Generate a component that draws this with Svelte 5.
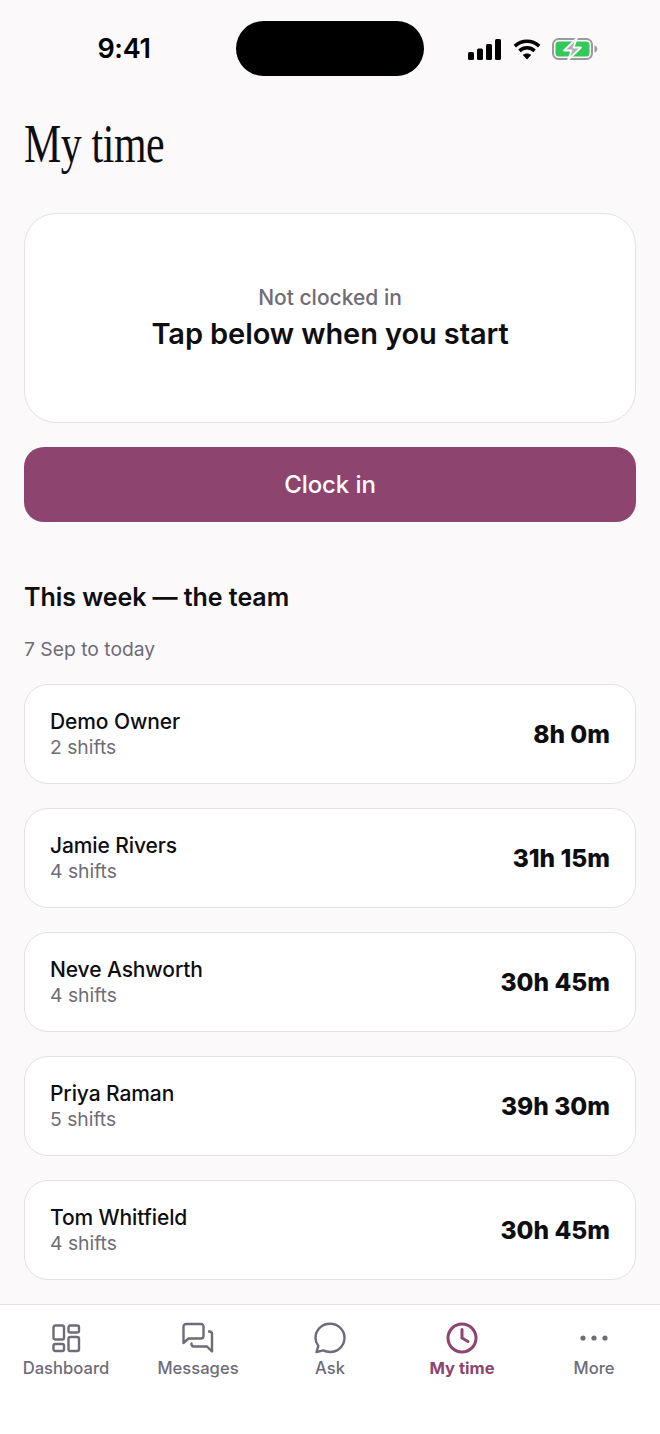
<script>
  const team = [
    { name: 'Demo Owner', shifts: '2 shifts', total: '8h 0m' },
    { name: 'Jamie Rivers', shifts: '4 shifts', total: '31h 15m' },
    { name: 'Neve Ashworth', shifts: '4 shifts', total: '30h 45m' },
    { name: 'Priya Raman', shifts: '5 shifts', total: '39h 30m' },
    { name: 'Tom Whitfield', shifts: '4 shifts', total: '30h 45m' }
  ];
</script>

<div class="screen">
  <header class="status">
    <span class="clock">9:41</span>
    <div class="island"></div>
    <div class="indicators">
      <svg width="34" height="21" viewBox="0 0 34 21" fill="#000">
        <rect x="0" y="13" width="6" height="8" rx="1.5"/>
        <rect x="9" y="9.5" width="6" height="11.5" rx="1.5"/>
        <rect x="18" y="5" width="6" height="16" rx="1.5"/>
        <rect x="27" y="0" width="6" height="21" rx="1.5"/>
      </svg>
      <svg width="28" height="21" viewBox="0 0 28 21" fill="none" stroke="#000" stroke-width="3.6">
        <path d="M1.8 7.2C9 .6 19 .6 26.2 7.2"/>
        <path d="M6.4 11.8c4.5-4 10.700-4 15.200 0"/>
        <path d="M14 20.500l-4.200-4.600c2.400-2 6-2 8.400 0z" fill="#000" stroke="none"/>
      </svg>
      <svg width="46" height="22" viewBox="0 0 46 22" fill="none">
        <rect x="1" y="1" width="39" height="20" rx="5.500" stroke="#9b9b9f" stroke-width="2"/>
        <rect x="3.500" y="3.500" width="34" height="15" rx="3.500" fill="#34c759"/>
        <path d="M42.500 7.500c1.800.6 2.800 1.900 2.800 3.500s-1 2.900-2.800 3.500z" fill="#9b9b9f"/>
        <path d="M25 0 12 12.500h7.500L16 22l13-12.500h-7.500z" fill="#aeaeb2" stroke="#fbf9fa" stroke-width="1.800" stroke-linejoin="round"/>
      </svg>
    </div>
  </header>

  <main class="content">
    <h1>My time</h1>

    <section class="state-card">
      <p class="state-label">Not clocked in</p>
      <p class="state-title">Tap below when you start</p>
    </section>

    <button class="clock-in" type="button">Clock in</button>

    <h2>This week — the team</h2>
    <p class="range">7 Sep to today</p>

    <ul class="team">
      {#each team as member}
        <li class="row">
          <div class="who">
            <span class="name">{member.name}</span>
            <span class="shifts">{member.shifts}</span>
          </div>
          <span class="total">{member.total}</span>
        </li>
      {/each}
    </ul>
  </main>

  <nav class="tabs">
    <div class="tab">
      <svg width="32" height="32" viewBox="0 0 32 32" fill="none" stroke="currentColor" stroke-width="2.400" stroke-linejoin="round">
        <rect x="3.500" y="3.500" width="10.500" height="14" rx="1.800"/>
        <rect x="18.500" y="3.500" width="10.500" height="7" rx="1.800"/>
        <rect x="3.500" y="22" width="10.500" height="7" rx="1.800"/>
        <rect x="18.500" y="15" width="10.500" height="14" rx="1.800"/>
      </svg>
      <span>Dashboard</span>
    </div>
    <div class="tab">
      <svg width="32" height="32" viewBox="0 0 32 32" fill="none" stroke="currentColor" stroke-width="2.400" stroke-linecap="round" stroke-linejoin="round">
        <path d="M1.500 21V4.500a2.500 2.500 0 0 1 2.500-2.500h15a2.500 2.500 0 0 1 2.500 2.500V14a2.500 2.500 0 0 1-2.500 2.500H6.500z"/>
        <path d="M9.500 21.500v.5a2.500 2.500 0 0 0 2.500 2.500h13l5 5V12a2.500 2.500 0 0 0-2.500-2.500h-.5"/>
      </svg>
      <span>Messages</span>
    </div>
    <div class="tab">
      <svg width="32" height="32" viewBox="0 0 32 32" fill="none" stroke="currentColor" stroke-width="2.400" stroke-linecap="round" stroke-linejoin="round">
        <path d="M16 1.800c8.100 0 14.500 6.200 14.500 14s-6.400 14.200-14.500 14.200c-2.500 0-4.800-.6-6.800-1.600L2.500 30l1.800-6.200C2.500 21.500 1.500 18.800 1.500 15.800 1.500 8 7.900 1.800 16 1.800z"/>
      </svg>
      <span>Ask</span>
    </div>
    <div class="tab active">
      <svg width="32" height="32" viewBox="0 0 32 32" fill="none" stroke="currentColor" stroke-width="3" stroke-linecap="round" stroke-linejoin="round">
        <circle cx="16" cy="16" r="14"/>
        <path d="M16 7.500V16l6 3.500"/>
      </svg>
      <span>My time</span>
    </div>
    <div class="tab">
      <svg width="32" height="32" viewBox="0 0 32 32" fill="currentColor">
        <circle cx="5" cy="16" r="2.600"/>
        <circle cx="16" cy="16" r="2.600"/>
        <circle cx="27" cy="16" r="2.600"/>
      </svg>
      <span>More</span>
    </div>
  </nav>
</div>

<style>
  :global(body) {
    margin: 0;
    background: #fbf9fa;
  }

  .screen {
    width: 660px;
    height: 1434px;
    display: flex;
    flex-direction: column;
    background: #fbf9fa;
    color: #0e0e10;
    font-family: Inter, "Liberation Sans", sans-serif;
    overflow: hidden;
  }

  .status {
    height: 96px;
    flex: none;
    box-sizing: border-box;
    padding: 21px 62px 0 0;
    display: grid;
    grid-template-columns: 236px 188px 1fr;
    align-items: start;
  }

  .clock {
    padding-top: 13px;
    text-align: center;
    padding-left: 12px;
    font-size: 27px;
    line-height: 30px;
    font-weight: 600;
    letter-spacing: -0.3px;
    color: #000;
  }

  .island {
    width: 188px;
    height: 55px;
    border-radius: 28px;
    background: #000;
  }

  .indicators {
    display: flex;
    align-items: center;
    gap: 11px;
    padding: 17px 0 0 44px;
  }

  .content {
    flex: 1;
    padding: 0 24px;
  }

  h1 {
    margin: 22px 0 0;
    font-family: "Liberation Serif", serif;
    font-weight: 400;
    font-size: 54px;
    line-height: 52px;
    letter-spacing: -0.5px;
    transform: scaleX(0.775);
    transform-origin: left center;
    white-space: nowrap;
  }

  .state-card {
    margin-top: 43px;
    height: 210px;
    box-sizing: border-box;
    background: #fff;
    border: 1px solid #e4e1e3;
    border-radius: 32px;
    display: flex;
    flex-direction: column;
    align-items: center;
    justify-content: center;
  }

  .state-label {
    margin: 0;
    font-size: 21px;
    line-height: 28px;
    font-weight: 500;
    color: #6e6c76;
  }

  .state-title {
    margin: 3px 0 0;
    font-size: 29px;
    line-height: 38px;
    font-weight: 600;
    letter-spacing: -0.1px;
    color: #0e0e10;
  }

  .clock-in {
    display: block;
    width: 100%;
    height: 75px;
    margin-top: 24px;
    border: 0;
    border-radius: 20px;
    background: #8d446e;
    color: #fff;
    font: 500 24px/32px Inter, "Liberation Sans", sans-serif;
    letter-spacing: -0.1px;
  }

  h2 {
    margin: 58px 0 0;
    font-size: 25px;
    line-height: 34px;
    font-weight: 600;
    letter-spacing: -0.05px;
  }

  .range {
    margin: 21px 0 0;
    font-size: 19.3px;
    line-height: 28px;
    color: #6e6c76;
  }

  .team {
    list-style: none;
    margin: 21px 0 0;
    padding: 0;
    display: flex;
    flex-direction: column;
    gap: 24px;
  }

  .row {
    height: 100px;
    box-sizing: border-box;
    padding: 0 25px;
    display: flex;
    align-items: center;
    justify-content: space-between;
    background: #fff;
    border: 1px solid #e4e1e3;
    border-radius: 24px;
  }

  .who {
    display: flex;
    flex-direction: column;
  }

  .name {
    font-size: 21px;
    line-height: 26px;
    font-weight: 500;
    letter-spacing: -0.1px;
  }

  .shifts {
    font-size: 19.300px;
    line-height: 24px;
    color: #6e6c76;
  }

  .total {
    font-size: 24.500px;
    line-height: 32px;
    font-weight: 800;
  }

  .tabs {
    flex: none;
    height: 130px;
    box-sizing: border-box;
    border-top: 1px solid #e4e1e3;
    background: #fff;
    display: grid;
    grid-template-columns: repeat(5, 132px);
    padding-top: 17px;
  }

  .tab {
    display: flex;
    flex-direction: column;
    align-items: center;
    gap: 2px;
    color: #6e6c76;
    font-size: 16.600px;
    line-height: 24px;
    font-weight: 500;
  }

  .tab.active {
    color: #8d446e;
    font-weight: 700;
  }
</style>
